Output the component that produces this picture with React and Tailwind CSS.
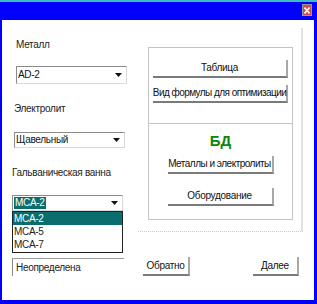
import React from "react";

function Arrow() {
  return (
    <svg width="7" height="4" viewBox="0 0 7 4" className="block">
      <polygon points="0,0 7,0 3.5,4" fill="#111" />
    </svg>
  );
}

function Btn({ children, className = "" }) {
  return (
    <div
      className={
        "flex items-center justify-center whitespace-nowrap bg-white border-r-[2px] border-b-[2px] border-r-[#a8a8a8] border-b-[#7a7a7a] text-[10px] leading-[12px] text-[#111] " +
        className
      }
    >
      {children}
    </div>
  );
}

function Select({ children, className = "" }) {
  return (
    <div
      className={
        "flex items-center justify-between bg-white border-t border-l border-t-[#8a8a8a] border-l-[#8a8a8a] border-r border-b border-r-[#d8d8d8] border-b-[#d8d8d8] pl-[1px] pr-[4px] text-[10px] leading-[12px] text-[#111] " +
        className
      }
    >
      <div className="flex items-center">{children}</div>
      <Arrow />
    </div>
  );
}

export default function App() {
  return (
    <div className="w-[317px] h-[304px] bg-[#0000ff] flex flex-col overflow-hidden font-['Liberation_Sans',Arial,sans-serif]">
      <div className="h-[2px] bg-[#3cbcbc]" />
      <div className="h-[18px] flex justify-end items-start pr-[5px] pt-[2px]">
        <div className="w-[10px] h-[12px] bg-[#d24a4a] border border-[#9a9a9a] flex items-center justify-center">
          <svg width="6" height="7" viewBox="0 0 6 7">
            <path d="M0.5 0.5 L5.5 6.5 M5.5 0.5 L0.5 6.5" stroke="#fff" strokeWidth="1.6" />
          </svg>
        </div>
      </div>
      <div className="flex-1 ml-[2px] mr-[3px] mb-[4px] bg-white flex">
        {/* Left column */}
        <div className="w-[136px] flex flex-col text-[10px] leading-[12px] text-[#222] tracking-[-0.3px]">
          <div className="mt-[19px] ml-[14px] h-[12px]">Металл</div>
          <Select className="mt-[15px] ml-[14px] w-[111px] h-[18px]">AD-2</Select>
          <div className="mt-[19px] ml-[12px] h-[12px]">Электролит</div>
          <Select className="mt-[17px] ml-[12px] w-[111px] h-[16px]">Щавельный</Select>
          <div className="mt-[19px] ml-[10px] h-[12px]">Гальваническая ванна</div>
          <Select className="mt-[16px] ml-[10px] w-[111px] h-[16px]">
            <span className="bg-[#0b6e6e] text-white px-[1px]">MCA-2</span>
          </Select>
          <div className="ml-[10px] w-[111px] h-[42px] border border-[#222] bg-white flex flex-col">
            <div className="h-[13px] bg-[#0b6e6e] text-white pl-[1px] flex items-center">MCA-2</div>
            <div className="h-[13px] pl-[1px] flex items-center">MCA-5</div>
            <div className="h-[13px] pl-[1px] flex items-center">MCA-7</div>
          </div>
          <div className="mt-[5px] ml-[10px] w-[112px] h-[18px] border-t border-l border-t-[#9a9a9a] border-l-[#8a8a8a] flex items-center pl-[3px]">
            Неопределена
          </div>
        </div>
        {/* Right column */}
        <div className="w-[165px] flex flex-col">
          <div className="mt-[8px] flex flex-col">
            <div className="h-[203px] border-r-[2px] border-r-[#e2e2e2] flex flex-col">
              <div className="mt-[19px] ml-[10px] w-[145px] h-[173px] border border-[#c4c4c4] flex flex-col">
                <div className="h-[76px] border-b border-[#c4c4c4] flex flex-col items-center">
                  <Btn className="mt-[12px] w-[135px] h-[18px] tracking-[-0.3px]">Таблица</Btn>
                  <Btn className="mt-[7px] w-[135px] h-[18px] tracking-[-0.55px]">Вид формулы для оптимизации</Btn>
                </div>
                <div className="flex flex-col items-center">
                  <div className="mt-[8px] h-[18px] leading-[18px] text-[15px] font-bold text-[#0a870a]">БД</div>
                  <Btn className="mt-[6px] w-[106px] h-[18px] tracking-[-0.5px]">Металлы и электролиты</Btn>
                  <Btn className="mt-[14px] w-[106px] h-[18px] tracking-[-0.3px]">Оборудование</Btn>
                </div>
              </div>
            </div>
            <div className="h-0 border-t border-dotted border-[#c8c8c8]" />
          </div>
          <div className="mt-[25px] flex justify-between pl-[5px] pr-[4px]">
            <Btn className="w-[47px] h-[19px] tracking-[-0.3px]">Обратно</Btn>
            <Btn className="w-[46px] h-[19px] tracking-[-0.3px]">Далее</Btn>
          </div>
        </div>
      </div>
    </div>
  );
}
